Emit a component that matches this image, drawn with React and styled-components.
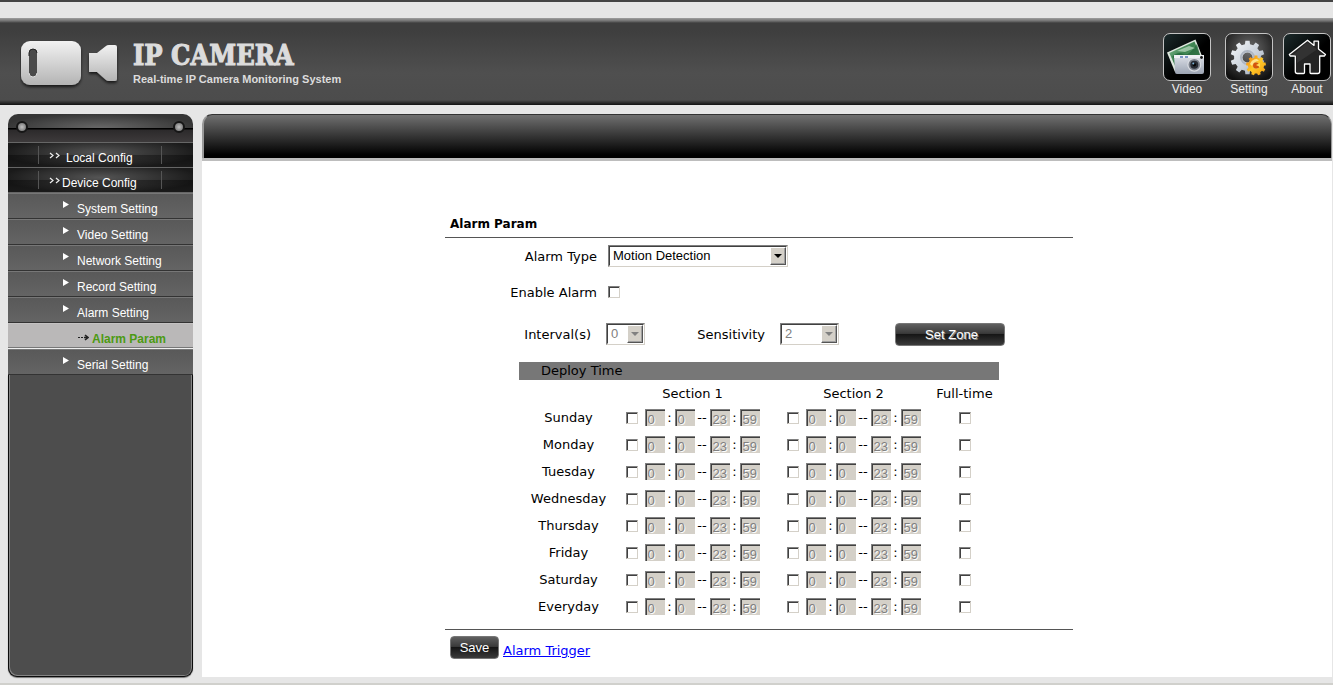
import React, { useState } from "react";
import styled, { createGlobalStyle } from "styled-components";

const days = [
  "Sunday",
  "Monday",
  "Tuesday",
  "Wednesday",
  "Thursday",
  "Friday",
  "Saturday",
  "Everyday",
];

const menu = [
  { name: "System Setting" },
  { name: "Video Setting" },
  { name: "Network Setting" },
  { name: "Record Setting" },
  { name: "Alarm Setting" },
  { name: "Alarm Param", active: true },
  { name: "Serial Setting" },
];

const gearPath = (cx, cy, outer, inner, hole, teeth) => {
  const step = (Math.PI * 2) / teeth;
  const point = (r, a) =>
    `${(cx + r * Math.cos(a)).toFixed(2)} ${(cy + r * Math.sin(a)).toFixed(2)}`;
  let d = "";
  for (let i = 0; i < teeth; i++) {
    const a = i * step - Math.PI / 2;
    d += `${i === 0 ? "M" : "L"}${point(inner, a - step * 0.3)}`;
    d += `L${point(outer, a - step * 0.2)}L${point(outer, a + step * 0.2)}`;
    d += `L${point(inner, a + step * 0.3)}`;
  }
  return `${d}ZM${cx - hole} ${cy}a${hole} ${hole} 0 1 0 ${hole * 2} 0a${hole} ${hole} 0 1 0 ${-hole * 2} 0Z`;
};

const CameraLogo = () => (
  <svg width="102" height="54" viewBox="0 0 102 54" aria-hidden="true">
    <defs>
      <linearGradient id="metal" x1="0" y1="0" x2="0" y2="1">
        <stop offset="0" stopColor="#f2f2f2" />
        <stop offset="1" stopColor="#b4b4b4" />
      </linearGradient>
      <filter id="drop" x="-10%" y="-10%" width="120%" height="130%">
        <feDropShadow dx="0" dy="2" stdDeviation="1.5" floodOpacity="0.7" />
      </filter>
    </defs>
    <g fill="url(#metal)" filter="url(#drop)">
      <rect x="1" y="1" width="60" height="44" rx="9" />
      <path d="M69 13h8l9-7q1-1 3-1h6q2 0 2 2v32q0 2-2 2h-6q-2 0-3-1l-9-8h-8z" />
    </g>
    <rect x="9" y="9" width="8" height="28" rx="4" fill="#4a4a4a" />
    <path d="M9 16v-3a4 4 0 0 1 8 0" fill="none" stroke="#222" />
    <path d="M9 33a4 4 0 0 0 8 0" fill="none" stroke="#ddd" />
  </svg>
);

const VideoIcon = () => (
  <svg width="46" height="46" viewBox="1 1 46 46" aria-hidden="true">
    <defs>
      <linearGradient id="photo" x1="0" y1="0" x2="1" y2="1">
        <stop offset="0" stopColor="#8fc59a" />
        <stop offset="0.45" stopColor="#3c8250" />
        <stop offset="1" stopColor="#8abf8d" />
      </linearGradient>
      <linearGradient id="body" x1="0" y1="0" x2="0" y2="1">
        <stop offset="0" stopColor="#dfe3ea" />
        <stop offset="1" stopColor="#9ba3b2" />
      </linearGradient>
    </defs>
    <path d="M4 19.5L32.5 6.5L39 23L12 39Z" fill="#dfe8df" />
    <path d="M6.3 20L31.5 8.4L37 22L13 35Z" fill="url(#photo)" />
    <path d="M9 24q6-6 11-3t14-10l3 11-25 4z" fill="#1f6237" opacity="0.7" />
    <path d="M14 18l12-5 6 2-10 4z" fill="#d5ecd9" opacity="0.6" />
    <path d="M11 22h30v17q0 2-2 2H14q-2 0-2-2z" fill="url(#body)" />
    <path d="M11 22h30v3H11z" fill="#eef0f4" />
    <path d="M17 24h3M22 24h3" stroke="#5677b5" strokeWidth="1.4" />
    <circle cx="38.5" cy="24.5" r="1.4" fill="#111" />
    <circle cx="31.3" cy="31.7" r="7" fill="#d9dce2" />
    <circle cx="31.3" cy="31.7" r="5.8" fill="#7c828d" />
    <circle cx="31.3" cy="31.7" r="4" fill="#262b33" />
    <circle cx="31.3" cy="31.7" r="1.8" fill="#050505" />
    <circle cx="30.3" cy="30.6" r="1" fill="#7db3d6" />
  </svg>
);

const SettingIcon = () => (
  <svg width="46" height="46" viewBox="1 1 46 46" aria-hidden="true">
    <defs>
      <linearGradient id="steel" x1="0" y1="0" x2="1" y2="1">
        <stop offset="0" stopColor="#f7f9fb" />
        <stop offset="0.6" stopColor="#c6ced8" />
        <stop offset="1" stopColor="#8e9aab" />
      </linearGradient>
      <linearGradient id="gold" x1="0" y1="0" x2="1" y2="1">
        <stop offset="0" stopColor="#ef7d0c" />
        <stop offset="0.5" stopColor="#ffc928" />
        <stop offset="1" stopColor="#f39a10" />
      </linearGradient>
    </defs>
    <path d={gearPath(22.5, 24.5, 17, 13.5, 5, 10)} fill="url(#steel)" fillRule="evenodd" />
    <circle cx="22.5" cy="24.5" r="6.5" fill="none" stroke="#aeb6c2" strokeWidth="2" />
    <path d={gearPath(31, 32.5, 10, 8, 3, 9)} fill="url(#gold)" fillRule="evenodd" />
    <path d="M25 31q2-5 7-5l2 2q-5 0-7 5z" fill="#fff0a8" opacity="0.8" />
    <circle cx="31" cy="32.5" r="3" fill="#d6540b" />
    <path d="M31 32l4-2v4z" fill="#ffd95a" />
  </svg>
);

const AboutIcon = () => (
  <svg width="46" height="46" viewBox="1 1 46 46" aria-hidden="true">
    <path
      d="M24.5 7.2L31 12.4V8.2H35.5V16L42.5 21.4L41.5 23H36.7V38.5Q36.7 40.5 34.7 40.5H28Q27 40.5 27 39.5V31H21.5V39.5Q21.5 40.5 20.5 40.5H14.5Q12.3 40.5 12.3 38.5V23H7.2L6.3 21.4Z"
      fill="#242424"
      stroke="#fff"
      strokeWidth="1.3"
      strokeLinejoin="round"
    />
    <path d="M24.5 9L34 16.5 14 30V23l-4-1z" fill="#3c3c3c" opacity="0.6" />
  </svg>
);

const Chevrons = () => (
  <svg width="12" height="7" viewBox="0 0 12 7" aria-hidden="true">
    <path d="M1 1l3 2.5L1 6M7 1l3 2.5L7 6" fill="none" stroke="#eee" strokeWidth="1.2" />
  </svg>
);

const Select = ({ id, options, disabled, size }) => (
  <SelectBox $size={size}>
    <select id={id} disabled={disabled}>
      {options.map((option) => (
        <option key={option}>{option}</option>
      ))}
    </select>
    <Drop $disabled={disabled} aria-hidden="true" />
  </SelectBox>
);

const Section = ({ name }) => {
  const [on, setOn] = useState(false);
  return (
    <Times>
      <Check
        type="checkbox"
        aria-label={name}
        checked={on}
        onChange={(e) => setOn(e.target.checked)}
      />
      <TimeInput aria-label={`${name} start hour`} defaultValue="0" disabled={!on} />
      <Colon>:</Colon>
      <TimeInput aria-label={`${name} start minute`} defaultValue="0" disabled={!on} />
      <Dash>--</Dash>
      <TimeInput aria-label={`${name} end hour`} defaultValue="23" disabled={!on} />
      <Colon>:</Colon>
      <TimeInput aria-label={`${name} end minute`} defaultValue="59" disabled={!on} />
    </Times>
  );
};

const App = () => {
  return (
    <Page>
      <GlobalStyle />
      <Header>
        <Brand>
          <CameraLogo />
          <div>
            <h1>IP CAMERA</h1>
            <p>Real-time IP Camera Monitoring System</p>
          </div>
        </Brand>
        <TopNav>
          <a href="#video">
            <IconTile>
              <VideoIcon />
            </IconTile>
            <span>Video</span>
          </a>
          <a href="#setting">
            <IconTile $grey>
              <SettingIcon />
            </IconTile>
            <span>Setting</span>
          </a>
          <a href="#about">
            <IconTile>
              <AboutIcon />
            </IconTile>
            <span>About</span>
          </a>
        </TopNav>
      </Header>
      <Columns>
        <Sidebar>
          <SidebarTop>
            <Screw />
            <Screw />
          </SidebarTop>
          <GroupLink href="#local">
            <Chevrons />
            Local Config
          </GroupLink>
          <GroupLink href="#device" $open>
            <Chevrons />
            Device Config
          </GroupLink>
          {menu.map((item) => (
            <MenuLink key={item.name} href="#menu" $active={item.active}>
              {item.active ? (
                <svg width="11" height="7" viewBox="0 0 11 7">
                  <path d="M0 3.5h2M3 3.5h2" stroke="#222" />
                  <path d="M6 3.5h4M7 1l3 2.5L7 6" fill="none" stroke="#222" strokeWidth="1.6" />
                </svg>
              ) : (
                <svg width="6" height="7" viewBox="0 0 6 7">
                  <path d="M0 0L6 3.5L0 7Z" fill="#fff" />
                </svg>
              )}
              {item.name}
            </MenuLink>
          ))}
          <SidebarRest />
        </Sidebar>
        <Main>
          <Banner />
          <Form onSubmit={(e) => e.preventDefault()}>
            <h2>Alarm Param</h2>
            <Field>
              <label htmlFor="type">Alarm Type</label>
              <Select
                id="type"
                size="180px"
                options={["Motion Detection", "Video Lost", "Sensor Alarm"]}
              />
            </Field>
            <Field>
              <label htmlFor="enable">Enable Alarm</label>
              <Check id="enable" type="checkbox" />
            </Field>
            <Params>
              <label htmlFor="interval">Interval(s)</label>
              <Select id="interval" size="39px" options={["0"]} disabled />
              <label htmlFor="sensitivity">Sensitivity</label>
              <Select id="sensitivity" size="59px" options={["2"]} disabled />
              <Button type="button" $wide>
                Set Zone
              </Button>
            </Params>
            <Schedule>
              <caption>Deploy Time</caption>
              <thead>
                <tr>
                  <th aria-label="Day" />
                  <th>Section 1</th>
                  <th>Section 2</th>
                  <th>Full-time</th>
                </tr>
              </thead>
              <tbody>
                {days.map((day) => (
                  <tr key={day}>
                    <th>{day}</th>
                    <td>
                      <Section name={`${day} section 1`} />
                    </td>
                    <td>
                      <Section name={`${day} section 2`} />
                    </td>
                    <td>
                      <Check type="checkbox" aria-label={`${day} full-time`} />
                    </td>
                  </tr>
                ))}
              </tbody>
            </Schedule>
            <Actions>
              <Button type="submit">Save</Button>
              <a href="#trigger">Alarm Trigger</a>
            </Actions>
          </Form>
        </Main>
      </Columns>
    </Page>
  );
};

const GlobalStyle = createGlobalStyle`
  * {
    box-sizing: border-box;
  }

  body {
    margin: 0;
    background: #e6e6e6;
    color: #000;
    font-family: Verdana, "DejaVu Sans", sans-serif;
    font-size: 13px;
  }

  h1, h2, p {
    margin: 0;
  }
`;

const Page = styled.div`
  display: flex;
  flex-direction: column;
  min-height: 100vh;
  padding-top: 16px;
  border-top: 2px solid #444;
  border-bottom: 2px solid #d0d0cc;
`;

const Header = styled.header`
  display: flex;
  justify-content: space-between;
  height: 87px;
  background: linear-gradient(
    #a0a0a0,
    #707070 3px,
    #3e3e3e 5px,
    #3e3e3e 12px,
    #4f4f4f 55px,
    #4c4c4c 82px,
    #101010 87px
  );
`;

const Brand = styled.div`
  display: flex;
  gap: 11px;
  padding: 22px 0 0 20px;
  color: #dcdcdc;

  h1 {
    font: bold 27px/31px "DejaVu Serif Condensed", "DejaVu Serif", serif;
    -webkit-text-stroke: 1px #dcdcdc;
  }

  p {
    font: bold 11px/16px "Liberation Sans", Arial, sans-serif;
  }
`;

const TopNav = styled.nav`
  display: grid;
  grid-template-columns: 62px 58px 48px;
  padding: 15px 2px 0 0;

  a {
    width: 48px;
    color: #eee;
    font: 12px/16px "Liberation Sans", Arial, sans-serif;
    text-align: center;
    text-decoration: none;
  }
`;

const IconTile = styled.div`
  width: 48px;
  height: 48px;
  border: 1px solid #c4c4c4;
  border-radius: 7px;
  background: ${(pr) =>
    pr.$grey
      ? "radial-gradient(circle at 50% 35%, #707070, #111 85%)"
      : "linear-gradient(135deg, #1b2a2b, #000 55%)"};

  svg {
    display: block;
  }
`;

const Columns = styled.div`
  display: flex;
  flex: 1;
  gap: 9px;
  padding: 9px 1px 6px 8px;
`;

const Sidebar = styled.nav`
  display: flex;
  flex-direction: column;
  width: 185px;
  font: 12px/16px "Liberation Sans", Arial, sans-serif;
`;

const SidebarTop = styled.div`
  display: flex;
  justify-content: space-between;
  height: 28px;
  padding: 7px 8px 0;
  border-radius: 10px 10px 0 0;
  background:
    radial-gradient(ellipse at 50% 100%, #686868, #353535 75%) 0 0 / 100% 14px no-repeat,
    linear-gradient(#000 15px, #2c2a2b 16px, #3d3a3b);
`;

const Screw = styled.i`
  width: 12px;
  height: 12px;
  border: 2px solid #161616;
  border-radius: 50%;
  background: radial-gradient(#c0c0c0, #666);
`;

const GroupLink = styled.a`
  display: flex;
  gap: ${(pr) => (pr.$open ? "1px" : "5px")};
  height: ${(pr) => (pr.$open ? "26px" : "25px")};
  padding: 7px 0 0 41px;
  border: 0 solid #666;
  border-width: ${(pr) => (pr.$open ? "1px 0" : "1px 0 0")};
  color: #fff;
  text-decoration: none;
  background:
    linear-gradient(#555, #555) 30px 3px / 1px 18px no-repeat,
    linear-gradient(#555, #555) 153px 3px / 1px 18px no-repeat,
    linear-gradient(transparent 50%, rgba(0, 0, 0, 0.35) 50%, transparent),
    radial-gradient(ellipse at 50% 40%, #555, #1a1a1a 75%);

  svg {
    margin-top: 2px;
  }
`;

const MenuLink = styled.a`
  display: flex;
  gap: ${(pr) => (pr.$active ? "3px" : "8px")};
  height: 26px;
  padding: 7px 0 0 ${(pr) => (pr.$active ? "70px" : "55px")};
  border-top: 1px solid ${(pr) => (pr.$active ? "#c4c2c2" : "#777")};
  border-bottom: 1px solid ${(pr) => (pr.$active ? "#eee" : "#333")};
  background: ${(pr) =>
    pr.$active ? "linear-gradient(#bab8b8 23px, #777 23px)" : "linear-gradient(#595959, #646464)"};
  color: ${(pr) => (pr.$active ? "#4c9a12" : "#fff")};
  font-weight: ${(pr) => (pr.$active ? "bold" : "normal")};
  text-decoration: none;

  svg {
    margin-top: ${(pr) => (pr.$active ? "3px" : "0")};
  }
`;

const SidebarRest = styled.div`
  flex: 1;
  min-height: 100px;
  border: 1px solid #0c0c0c;
  border-top: 0;
  border-radius: 0 0 9px 9px;
  background: #4d4d4d;
  box-shadow: inset 1px -1px #858585, inset -1px 0 #858585, 0 1px 1px #777;
`;

const Main = styled.main`
  display: flex;
  flex-direction: column;
  flex: 1;
`;

const Banner = styled.div`
  height: 44px;
  border: 0 solid #999;
  border-width: 1px 1px 0 2px;
  border-top-color: #333;
  border-radius: 10px 10px 0 0;
  background: linear-gradient(#707070, #000 40px);
`;

const Form = styled.form`
  flex: 1;
  padding: 55px calc(50% - 306px) 12px calc(50% - 322px);
  border-top: 3px solid #bdbdbd;
  background: #fff;

  h2 {
    padding: 0 5px 4px;
    border-bottom: 1px solid #555;
    font-size: 12px;
    line-height: 17px;
  }
`;

const Field = styled.div`
  display: grid;
  grid-template-columns: 152px auto;
  gap: 11px;
  align-items: center;
  justify-items: start;
  height: 36px;

  label {
    justify-self: end;
  }
`;

const Params = styled.div`
  display: grid;
  grid-template-columns: 146px 39px 105px 59px auto;
  column-gap: 15px;
  align-items: center;
  height: 48px;

  label {
    text-align: right;
  }

  button {
    margin-left: 41px;
  }
`;

const SelectBox = styled.div`
  position: relative;
  width: ${(pr) => pr.$size};
  height: 22px;
  border: 1px solid;
  border-color: #808080 #d4d0c8 #d4d0c8 #808080;

  select {
    appearance: none;
    display: block;
    width: 100%;
    height: 20px;
    padding: 0 0 0 3px;
    border: 1px solid;
    border-color: #404040 #fff #fff #404040;
    border-radius: 0;
    background: #fff;
    color: #000;
    font: 13px/16px "Liberation Sans", Arial, sans-serif;
  }

  select:disabled {
    color: #808080;
    opacity: 1;
  }
`;

const Drop = styled.span`
  position: absolute;
  top: 1px;
  right: 1px;
  display: flex;
  align-items: center;
  justify-content: center;
  width: 16px;
  height: 18px;
  border: 1px solid;
  border-color: #fff #555 #555 #fff;
  background: #d4d0c8;
  box-shadow: inset -1px -1px #a0a0a0;
  pointer-events: none;

  &::after {
    content: "";
    border: 4px solid transparent;
    border-top-color: ${(pr) => (pr.$disabled ? "#808080" : "#000")};
    border-bottom: 0;
  }
`;

const Check = styled.input`
  appearance: none;
  display: block;
  width: 12px;
  height: 12px;
  margin: 0;
  border: 1px solid;
  border-color: #808080 #d4d0c8 #d4d0c8 #808080;
  background: #fff;
  box-shadow: inset 1px 1px #404040;

  &:checked {
    background: #404040;
  }
`;

const Button = styled.button`
  width: ${(pr) => (pr.$wide ? "110px" : "49px")};
  height: 23px;
  padding: ${(pr) => (pr.$wide ? "2px 0 0 3px" : "0")};
  border: 1px solid #777;
  border-radius: 4px;
  background: linear-gradient(#606060, #3a3a3a 45%, #161616 50%, #3a3a3a);
  color: #fff;
  font: 13px/16px "Liberation Sans", Arial, sans-serif;
  text-align: center;
  text-shadow: ${(pr) => (pr.$wide ? "1px 1px #888" : "none")};
`;

const Schedule = styled.table`
  width: 480px;
  margin: 4px 0 0 74px;
  border-collapse: collapse;
  table-layout: fixed;

  caption {
    height: 18px;
    padding-left: 22px;
    background: #777;
    line-height: 18px;
    text-align: left;
  }

  th,
  td {
    height: 27px;
    padding: 0;
    font-weight: normal;
    text-align: center;
  }

  thead th {
    width: 161px;
    height: 24px;
    padding-top: 2px;
  }

  thead th:first-child {
    width: 93px;
  }

  thead th:last-child {
    width: 65px;
  }

  tbody th {
    padding-left: 6px;
  }

  th:last-child,
  td:last-child {
    padding-right: 4px;
  }

  td > input {
    margin: 0 auto;
  }
`;

const Times = styled.div`
  display: flex;
  align-items: center;
  justify-content: center;

  input[type="checkbox"] {
    margin-right: 7px;
  }
`;

const TimeInput = styled.input`
  width: 20px;
  height: 17px;
  padding: 3px 0 0 2px;
  border: 0 solid #808080;
  border-width: 1px 0 0 1px;
  border-radius: 0;
  background: #d4d0c8;
  box-shadow: inset 1px 1px #404040;
  color: #808080;
  font: 13px/13px "Liberation Sans", Arial, sans-serif;
  text-shadow: 1px 1px #fff;

  &:enabled {
    background: #fff;
    color: #000;
  }
`;

const Colon = styled.span`
  width: 10px;
  text-align: center;
`;

const Dash = styled.span`
  width: 15px;
  text-align: center;
`;

const Actions = styled.div`
  display: flex;
  gap: 4px;
  align-items: center;
  margin-top: 9px;
  padding: 6px 5px 0;
  border-top: 1px solid #555;

  a {
    padding-top: 5px;
    color: #00f;
  }
`;

export default App;
